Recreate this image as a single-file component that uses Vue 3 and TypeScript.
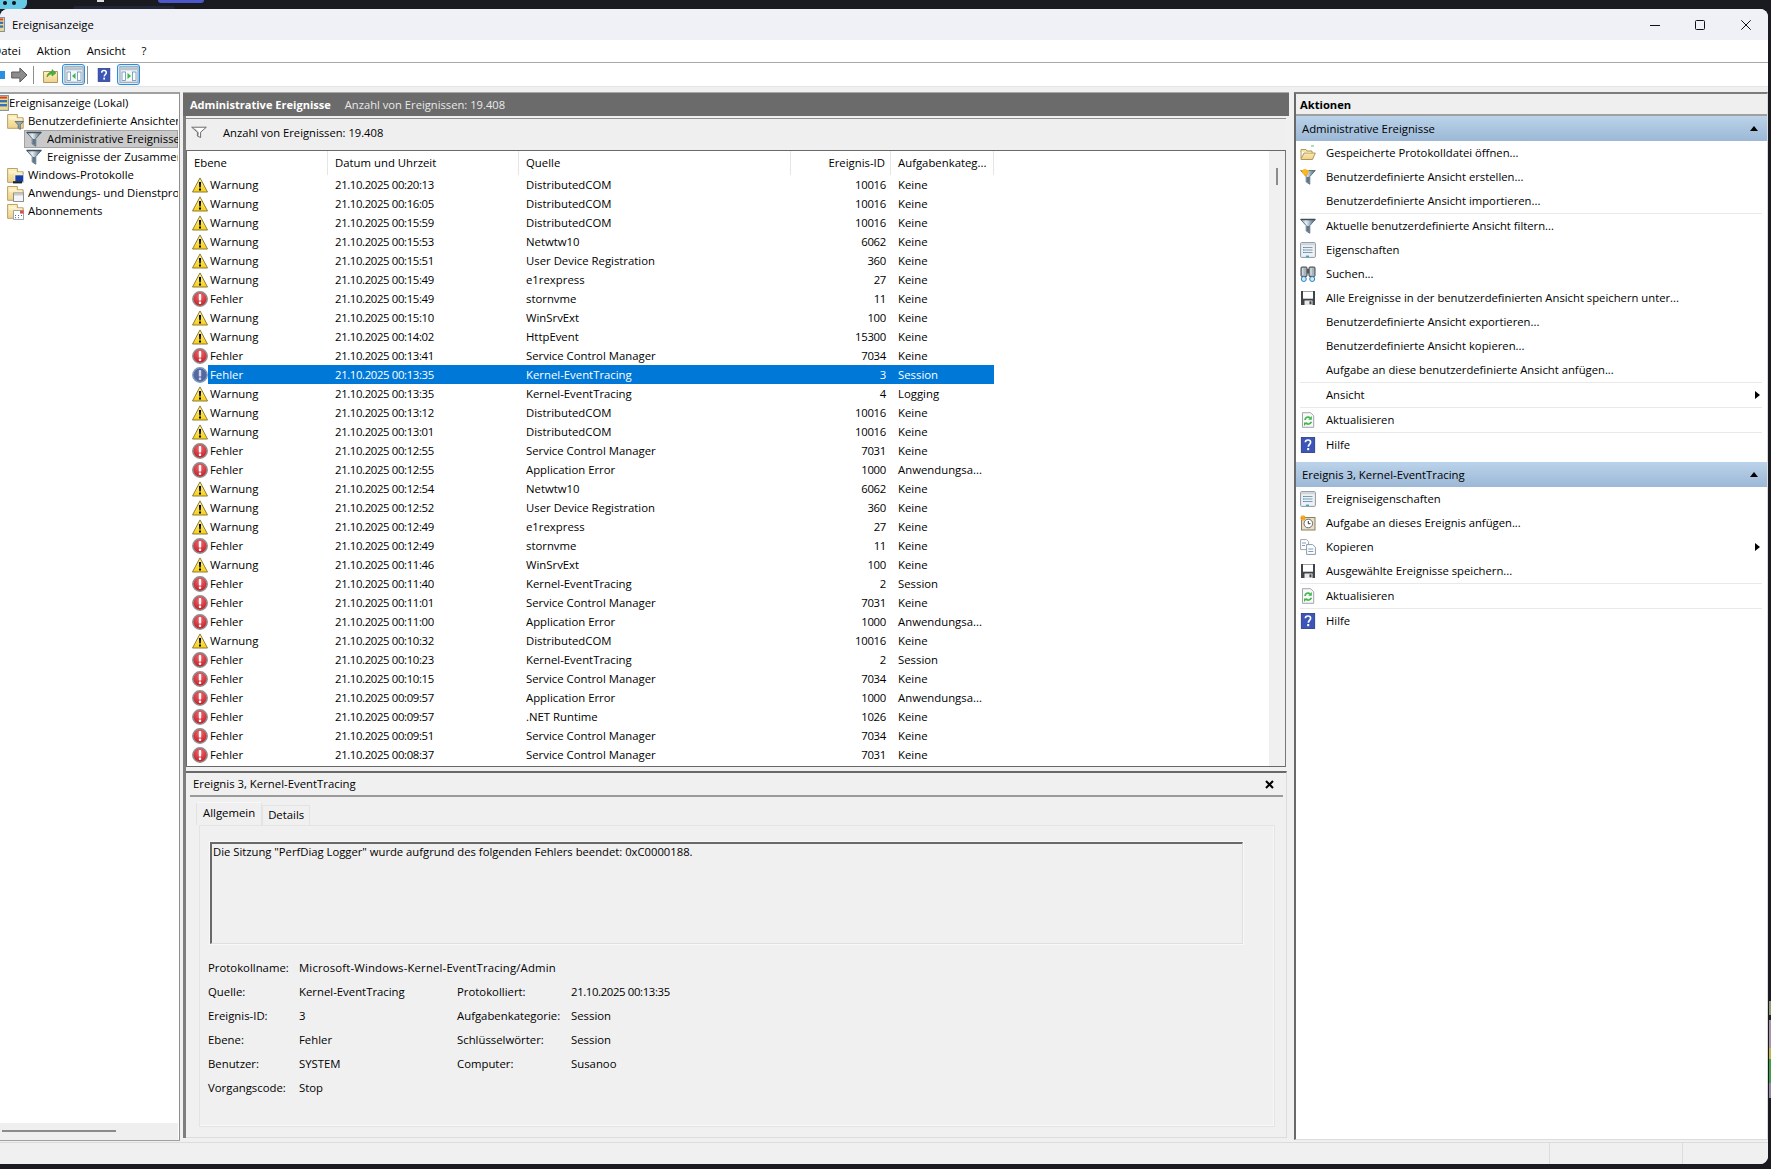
<script setup lang="ts">
interface Row { k: 'w' | 'e' | 's' | ''; t: string; q: string; id: string; c: string }
const SCM = 'Service Control Manager'
const DC = 'DistributedCOM'
const KE = 'Kernel-EventTracing'
const AE = 'Application Error'
const AN = 'Anwendungsa...'
const r = (k: Row['k'], t: string, q: string, id: string, c = 'Keine'): Row => ({ k, t, q, id, c })
const rows: Row[] = [
  r('w', '00:20:13', DC, '10016'), r('w', '00:16:05', DC, '10016'), r('w', '00:15:59', DC, '10016'),
  r('w', '00:15:53', 'Netwtw10', '6062'), r('w', '00:15:51', 'User Device Registration', '360'),
  r('w', '00:15:49', 'e1rexpress', '27'), r('e', '00:15:49', 'stornvme', '11'),
  r('w', '00:15:10', 'WinSrvExt', '100'), r('w', '00:14:02', 'HttpEvent', '15300'),
  r('e', '00:13:41', SCM, '7034'), r('s', '00:13:35', KE, '3', 'Session'),
  r('w', '00:13:35', KE, '4', 'Logging'), r('w', '00:13:12', DC, '10016'), r('w', '00:13:01', DC, '10016'),
  r('e', '00:12:55', SCM, '7031'), r('e', '00:12:55', AE, '1000', AN),
  r('w', '00:12:54', 'Netwtw10', '6062'), r('w', '00:12:52', 'User Device Registration', '360'),
  r('w', '00:12:49', 'e1rexpress', '27'), r('e', '00:12:49', 'stornvme', '11'),
  r('w', '00:11:46', 'WinSrvExt', '100'), r('e', '00:11:40', KE, '2', 'Session'),
  r('e', '00:11:01', SCM, '7031'), r('e', '00:11:00', AE, '1000', AN),
  r('w', '00:10:32', DC, '10016'), r('e', '00:10:23', KE, '2', 'Session'),
  r('e', '00:10:15', SCM, '7034'), r('e', '00:09:57', AE, '1000', AN),
  r('e', '00:09:57', '.NET Runtime', '1026'), r('e', '00:09:51', SCM, '7034'), r('e', '00:08:37', SCM, '7031'),
]
const iconOf = (k: Row['k']) => (k === 'w' ? '#i-warn' : k === 's' ? '#i-err-sel' : '#i-err')

interface Act { t?: string; i?: string; sub?: boolean; sep?: boolean }
const actions1: Act[] = [
  { t: 'Gespeicherte Protokolldatei öffnen...', i: '#i-open' },
  { t: 'Benutzerdefinierte Ansicht erstellen...', i: '#i-funnel-new' },
  { t: 'Benutzerdefinierte Ansicht importieren...' },
  { sep: true },
  { t: 'Aktuelle benutzerdefinierte Ansicht filtern...', i: '#i-funnel' },
  { t: 'Eigenschaften', i: '#i-props' },
  { t: 'Suchen...', i: '#i-find' },
  { t: 'Alle Ereignisse in der benutzerdefinierten Ansicht speichern unter...', i: '#i-save' },
  { t: 'Benutzerdefinierte Ansicht exportieren...' },
  { t: 'Benutzerdefinierte Ansicht kopieren...' },
  { t: 'Aufgabe an diese benutzerdefinierte Ansicht anfügen...' },
  { sep: true },
  { t: 'Ansicht', sub: true },
  { sep: true },
  { t: 'Aktualisieren', i: '#i-refresh' },
  { sep: true },
  { t: 'Hilfe', i: '#i-help' },
]
const actions2: Act[] = [
  { t: 'Ereigniseigenschaften', i: '#i-props' },
  { t: 'Aufgabe an dieses Ereignis anfügen...', i: '#i-task' },
  { t: 'Kopieren', i: '#i-copy', sub: true },
  { t: 'Ausgewählte Ereignisse speichern...', i: '#i-save' },
  { sep: true },
  { t: 'Aktualisieren', i: '#i-refresh' },
  { sep: true },
  { t: 'Hilfe', i: '#i-help' },
]
const sections = [
  { title: 'Administrative Ereignisse', items: actions1 },
  { title: 'Ereignis 3, Kernel-EventTracing', items: actions2 },
]
const tree = [
  { t: 'Ereignisanzeige (Lokal)', l: 0, i: '#i-app' },
  { t: 'Benutzerdefinierte Ansichten', l: 1, i: '#i-f-funnel' },
  { t: 'Administrative Ereignisse', l: 2, i: '#i-funnel', sel: true },
  { t: 'Ereignisse der Zusammenfassung', l: 2, i: '#i-funnel' },
  { t: 'Windows-Protokolle', l: 1, i: '#i-f-win' },
  { t: 'Anwendungs- und Dienstprotokolle', l: 1, i: '#i-f-app' },
  { t: 'Abonnements', l: 1, i: '#i-f-sub' },
]
const fields = [
  { a: 'Protokollname:', b: 'Microsoft-Windows-Kernel-EventTracing/Admin', wide: true },
  { a: 'Quelle:', b: 'Kernel-EventTracing', c: 'Protokolliert:', d: '21.10.2025 00:13:35', date: true },
  { a: 'Ereignis-ID:', b: '3', c: 'Aufgabenkategorie:', d: 'Session' },
  { a: 'Ebene:', b: 'Fehler', c: 'Schlüsselwörter:', d: 'Session' },
  { a: 'Benutzer:', b: 'SYSTEM', c: 'Computer:', d: 'Susanoo' },
  { a: 'Vorgangscode:', b: 'Stop', c: '', d: '' },
]
</script>

<template>
  <div class="app">
    <svg class="sprite" width="0" height="0">
      <defs>
        <linearGradient id="g-y" x1="0" y1="0" x2="0" y2="1"><stop offset="0" stop-color="#fff6a0" /><stop offset="1" stop-color="#f8cf10" /></linearGradient>
        <radialGradient id="g-r" cx=".5" cy=".3" r=".75"><stop offset="0" stop-color="#ef6b70" /><stop offset="1" stop-color="#c2101c" /></radialGradient>
        <linearGradient id="g-f" x1="0" y1="0" x2="1" y2="0"><stop offset="0" stop-color="#8ea5b4" /><stop offset=".38" stop-color="#e6eef2" /><stop offset=".75" stop-color="#7d96a6" /><stop offset="1" stop-color="#556d7d" /></linearGradient>
        <linearGradient id="g-fo" x1="0" y1="0" x2="0" y2="1"><stop offset="0" stop-color="#fdf0bf" /><stop offset="1" stop-color="#eed28a" /></linearGradient>
      </defs>
      <symbol id="i-warn" viewBox="0 0 16 16">
        <path d="M8 .9 15.500 15H.5Z" fill="url(#g-y)" stroke="#8d7c3a" stroke-width="1" stroke-linejoin="round" />
        <path d="M6.900 5h2.200l-.4 5.600H7.300Z" fill="#000" /><rect x="7" y="11.500" width="2" height="2" fill="#000" />
      </symbol>
      <symbol id="i-err" viewBox="0 0 16 16">
        <circle cx="8" cy="8" r="7.200" fill="url(#g-r)" stroke="#8f8f8f" stroke-width="1.500" />
        <rect x="6.800" y="3" width="2.400" height="6.600" rx=".7" fill="#fff" /><rect x="6.800" y="10.600" width="2.400" height="2.400" rx=".8" fill="#fff" />
      </symbol>
      <symbol id="i-err-sel" viewBox="0 0 16 16">
        <circle cx="8" cy="8" r="7.200" fill="#55679f" stroke="#7d9ac2" stroke-width="1.500" />
        <rect x="6.800" y="3" width="2.400" height="6.600" rx=".7" fill="#cfd6ea" /><rect x="6.800" y="10.600" width="2.400" height="2.400" rx=".8" fill="#cfd6ea" />
      </symbol>
      <symbol id="i-funnel" viewBox="0 0 16 16">
        <path d="M.7 1.500h14.600L9.800 7.600v7.600L6.200 13V7.600Z" fill="url(#g-f)" stroke="#55697a" stroke-width=".9" stroke-linejoin="round" />
        <path d="M.7 1.500h14.600" stroke="#3f4e5a" stroke-width="1.300" />
        <path d="M6.700 8h2.600v6.300L6.700 12.700Z" fill="#5d7688" />
      </symbol>
      <symbol id="i-funnel-out" viewBox="0 0 16 16">
        <path d="M.7 1.500h14.600L9.600 7.600v6.600L6.400 12.400V7.600Z" fill="#fff" stroke="#5e5e5e" stroke-width="1" stroke-linejoin="round" />
        <path d="M3.500 3l4 4.500V12" fill="none" stroke="#a9a9a9" />
      </symbol>
      <symbol id="i-funnel-new" viewBox="0 0 16 16">
        <path d="M.7 1.500h14.600L9.800 7.600v7.600L6.200 13V7.600Z" fill="url(#g-f)" stroke="#55697a" stroke-width=".9" stroke-linejoin="round" />
        <path d="M6.700 8h2.600v6.300L6.700 12.700Z" fill="#5d7688" />
        <path d="M.8 1h8.400L6.600 7.400H5.600Z" fill="#f7a416" /><circle cx="5" cy="2.800" r="2.700" fill="#fdb722" />
      </symbol>
      <symbol id="i-open" viewBox="0 0 16 16">
        <path d="M1 6V14.500H12.500L15.300 8H4L1.600 13" fill="url(#g-fo)" stroke="#a88c4b" stroke-width=".9" />
        <path d="M1 6.500V4.500h5l1 1.500h5V8" fill="#f7e3a3" stroke="#a88c4b" stroke-width=".9" />
        <path d="M11 1h3" stroke="#5ec25e" stroke-width="1" />
      </symbol>
      <symbol id="i-props" viewBox="0 0 16 16">
        <rect x=".6" y=".6" width="14.800" height="14.800" rx="1" fill="#eef1f3" stroke="#8d979f" />
        <rect x="1.200" y="1.200" width="13.600" height="2" fill="#cdd5da" /><path d="M3.500 5.500h9M3.500 8h9M3.500 10.500h9" stroke="#7f9bb0" />
        <path d="M3 5.500h1M3 8h1M3 10.500h1" stroke="#3c8fd0" /><rect x="6" y="13.600" width="3" height="1.400" fill="#2aa8e0" />
      </symbol>
      <symbol id="i-find" viewBox="0 0 16 16">
        <rect x="1" y="1" width="6" height="9.500" rx="1" fill="#a7b4bd" stroke="#333" stroke-width=".9" />
        <rect x="9" y="1" width="6" height="9.500" rx="1" fill="#a7b4bd" stroke="#333" stroke-width=".9" />
        <rect x="7" y="3" width="2" height="4.500" fill="#555" /><path d="M2.800 2v7M11 2v7" stroke="#e5eaee" />
        <circle cx="3.800" cy="13" r="2.500" fill="#cfe7f7" stroke="#2b80bd" /><circle cx="12.200" cy="13" r="2.500" fill="#cfe7f7" stroke="#2b80bd" />
      </symbol>
      <symbol id="i-save" viewBox="0 0 16 16">
        <path d="M1 1h14v14H1Z" fill="#3f4449" />
        <rect x="3" y="1.500" width="10" height="7.200" fill="#fff" /><rect x="4.500" y="10.500" width="8" height="4.500" fill="#e9e9e9" /><rect x="9.500" y="11.300" width="2" height="3" fill="#3f4449" />
      </symbol>
      <symbol id="i-refresh" viewBox="0 0 16 16">
        <path d="M2.500.7h8l3.200 3v11.600H2.500Z" fill="#f8f8f8" stroke="#a0a6aa" />
        <path d="M5 8a3.200 3.200 0 0 1 5.200-2.200" fill="none" stroke="#3fb54a" stroke-width="1.700" />
        <path d="M11.300 9.800a3.200 3.200 0 0 1-5.500 1.200" fill="none" stroke="#3fb54a" stroke-width="1.700" />
        <path d="M11.800 4v3.800H8.200Z" fill="#3fb54a" /><path d="M4 14v-3.600h3.600Z" fill="#3fb54a" />
      </symbol>
      <symbol id="i-help" viewBox="0 0 16 16">
        <rect x="1.300" y=".5" width="13.400" height="15" fill="#3d55b8" stroke="#27387f" stroke-width=".8" />
        <path d="M5.400 5.300C5.400 2.200 10.600 2.200 10.600 5.300c0 2-2.300 2.200-2.300 4.400" fill="none" stroke="#fff" stroke-width="1.700" /><rect x="7.200" y="11" width="2" height="2.200" fill="#fff" />
      </symbol>
      <symbol id="i-task" viewBox="0 0 16 16">
        <rect x="1.500" y="2.500" width="13.500" height="12.500" fill="#e7dfc9" stroke="#8a7f62" />
        <circle cx="8.300" cy="8.500" r="4.300" fill="#fff" stroke="#6d6d6d" /><path d="M8.300 6v2.700h2.200" fill="none" stroke="#333" />
        <path d="M3 0v6M0 3h6M1 1l4 4M5 1 1 5" stroke="#f2a21c" stroke-width="1.100" />
      </symbol>
      <symbol id="i-copy" viewBox="0 0 16 16">
        <path d="M.6.6h6l2 2v8H.6Z" fill="#fff" stroke="#a0a6aa" /><path d="M6.600 5.600h6l2.800 2.600v7.200H6.600Z" fill="#fff" stroke="#8b9ba8" />
        <path d="M2 4h4M2 6.500h3M8.300 10h5M8.300 12.500h5" stroke="#7a9fc1" />
      </symbol>
      <symbol id="i-folder" viewBox="0 0 17 17">
        <path d="M.6 1.500h9.800v3.300h5.800v10.500H.6Z" fill="url(#g-fo)" stroke="#b2985c" stroke-width=".9" />
        <path d="M2 4.500h7M2 6h13" stroke="#fff6d8" />
      </symbol>
      <symbol id="i-f-funnel" viewBox="0 0 17 17">
        <use href="#i-folder" width="17" height="17" />
        <path d="M8 8.500h8.500l-3.200 3.400v4.600L11.200 15v-3.100Z" fill="#8fa5b5" stroke="#55646f" stroke-width=".8" />
      </symbol>
      <symbol id="i-f-win" viewBox="0 0 17 17">
        <use href="#i-folder" width="17" height="17" />
        <rect x="8" y="8" width="8.600" height="7" fill="#1340a8" stroke="#fff" stroke-width=".6" /><rect x="6" y="14.200" width="9" height="2.200" fill="#222" />
      </symbol>
      <symbol id="i-f-app" viewBox="0 0 17 17">
        <use href="#i-folder" width="17" height="17" />
        <rect x="6.600" y="8" width="10" height="8.400" fill="#f5f5f5" stroke="#777" stroke-width=".8" /><rect x="7" y="8.400" width="9.200" height="2" fill="#c2c9cf" />
      </symbol>
      <symbol id="i-f-sub" viewBox="0 0 17 17">
        <use href="#i-folder" width="17" height="17" />
        <rect x="6.600" y="7.600" width="10" height="8.800" fill="#fff" stroke="#8793a0" stroke-width=".8" />
        <rect x="13" y="7.600" width="3.600" height="3" fill="#e2504c" /><path d="M8 12.500h1M11 12.500h1M14 12.500h1M8 14.700h1M11 14.700h1" stroke="#3572b0" />
      </symbol>
      <symbol id="i-app" viewBox="0 0 14 16">
        <rect x=".6" y=".6" width="12.800" height="14.800" fill="#e9d890" stroke="#7788a0" />
        <rect x="3" y="5" width="9" height="2.400" fill="#3570b8" /><rect x="3" y="9" width="9" height="2.400" fill="#3570b8" /><rect x="3" y="1.600" width="9" height="2" fill="#d8402a" />
      </symbol>
      <symbol id="i-win" viewBox="0 0 20 17">
        <rect x="1" y=".8" width="18" height="15.400" fill="#f4f7fa" stroke="#8c9aa5" />
        <rect x="1.500" y="1.300" width="17" height="3" fill="#b9c6cf" />
        <rect x="3" y="6" width="3.500" height="8.500" fill="#fff" stroke="#5f8fb8" stroke-width=".8" /><rect x="13.500" y="6" width="3.500" height="8.500" fill="#fff" stroke="#5f8fb8" stroke-width=".8" />
      </symbol>
    </svg>

    <i class="bg-blob"><b></b><b></b></i>
    <i class="bg-white"></i>
    <i class="bg-navy"></i>
    <i class="bg-pill"></i>
    <i class="bg-sliver"></i>

    <div class="win">
      <header class="titlebar">
        <svg class="ticon" width="15" height="15"><use href="#i-app" /></svg>
        <span class="ttext">Ereignisanzeige</span>
        <div class="ctrls">
          <svg width="10" height="10" viewBox="0 0 10 10"><path d="M0 5.500h10" stroke="#111" stroke-width="1" /></svg>
          <svg width="10" height="10" viewBox="0 0 10 10"><rect x=".5" y=".5" width="9" height="9" rx="1" fill="none" stroke="#111" /></svg>
          <svg class="cl" width="10" height="10" viewBox="0 0 10 10"><path d="M.3.3l9.400 9.400M9.700.3.3 9.700" stroke="#111" stroke-width="1" /></svg>
        </div>
      </header>

      <nav class="menu"><span>Datei</span><span>Aktion</span><span>Ansicht</span><span>?</span></nav>

      <div class="toolbar">
        <svg class="tb-back" width="5" height="8" viewBox="0 0 5 8"><rect width="5" height="8" fill="#2b8fe0" /></svg>
        <svg class="tb-fwd" width="17" height="16" viewBox="0 0 17 16"><path d="M.7 5h8.200V1L16 8l-7.100 7v-4H.7Z" fill="#8c8c8c" stroke="#5b5b5b" /></svg>
        <span class="tb-sep"></span>
        <svg class="tb-up" width="15" height="16" viewBox="0 0 15 16"><path d="M.5 4.500h14v11H.5Z" fill="url(#g-fo)" stroke="#b2985c" /><path d="M4 10c0-3 2-5 5-5V2.500L13 6 9 9V7C7 7 5.500 8 4 10Z" fill="#4bb23f" stroke="#2f8a2a" stroke-width=".5" /></svg>
        <span class="tb-btn"><svg width="20" height="17"><use href="#i-win" /><path d="M11.500 7v6l-3.500-3z" fill="#3fb54a" /></svg></span>
        <span class="tb-sep s2"></span>
        <svg class="tb-help" width="14" height="16"><use href="#i-help" width="14" height="16" /></svg>
        <span class="tb-btn b2"><svg width="20" height="17"><use href="#i-win" /><path d="M8.500 7v6l3.500-3z" fill="#3fb54a" /></svg></span>
      </div>

      <main class="main">
        <aside class="left">
          <div class="tree">
            <div v-for="n in tree" :key="n.t" class="node" :class="['l' + n.l, { sel: n.sel }]">
              <svg class="nicon" :width="n.l === 0 ? 14 : n.l === 1 ? 17 : 16" :height="n.l === 1 ? 17 : 16"><use :href="n.i" /></svg>
              <span>{{ n.t }}</span>
            </div>
          </div>
          <div class="hscroll"><i></i></div>
        </aside>

        <section class="center">
          <div class="ctitle"><b>Administrative Ereignisse</b><span>Anzahl von Ereignissen: 19.408</span></div>
          <div class="cbody">
            <div class="listpane">
              <div class="strip">
                <svg width="16" height="13" viewBox="0 0 16 16" preserveAspectRatio="none"><use href="#i-funnel-out" /></svg>
                <span>Anzahl von Ereignissen: 19.408</span>
              </div>
              <div class="listframe">
                <div class="list">
                  <div class="head">
                    <div>Ebene</div><div>Datum und Uhrzeit</div><div>Quelle</div><div class="num">Ereignis-ID</div><div>Aufgabenkateg...</div>
                  </div>
                  <div v-for="(x, i) in rows" :key="i" class="row" :class="{ selected: x.k === 's' }">
                    <div class="lv"><svg width="16" height="16"><use :href="iconOf(x.k)" /></svg><span>{{ x.k === 'w' ? 'Warnung' : 'Fehler' }}</span></div>
                    <div class="date">21.10.2025 {{ x.t }}</div><div>{{ x.q }}</div><div class="num">{{ x.id }}</div><div>{{ x.c }}</div>
                  </div>
                  <div class="row"><div class="lv"><svg width="16" height="16"><use href="#i-err" /></svg></div></div>
                </div>
                <div class="vscroll"><i></i></div>
              </div>
            </div>

            <div class="detail">
              <div class="dtitle"><span>Ereignis 3, Kernel-EventTracing</span>
                <svg width="9" height="9" viewBox="0 0 9 9"><path d="M1 1l7 7M8 1 1 8" stroke="#000" stroke-width="2" /></svg>
              </div>
              <div class="tabs"><span class="tab on">Allgemein</span><span class="tab">Details</span></div>
              <div class="panel">
                <div class="msg">Die Sitzung "PerfDiag Logger" wurde aufgrund des folgenden Fehlers beendet: 0xC0000188.</div>
                <div class="fields">
                  <template v-for="f in fields" :key="f.a">
                    <div>{{ f.a }}</div>
                    <div :class="{ wide: f.wide }">{{ f.b }}</div>
                    <template v-if="!f.wide"><div>{{ f.c }}</div><div :class="{ date: f.date }">{{ f.d }}</div></template>
                  </template>
                </div>
              </div>
            </div>
          </div>
        </section>

        <aside class="right">
          <div class="rhead">Aktionen</div>
          <template v-for="(s, si) in sections" :key="s.title">
            <div class="sect" :class="{ second: si === 1 }"><span>{{ s.title }}</span><i class="up"></i></div>
            <template v-for="(a, ai) in s.items" :key="ai">
              <div v-if="a.sep" class="rsep"></div>
              <div v-else class="act">
                <svg v-if="a.i" width="16" height="16"><use :href="a.i" /></svg><i v-else class="noicon"></i>
                <span>{{ a.t }}</span><i v-if="a.sub" class="more"></i>
              </div>
            </template>
          </template>
        </aside>
      </main>

      <footer class="status"><i></i><i></i></footer>
    </div>
  </div>
</template>

<style scoped>
.app {
  position: relative; width: 1771px; height: 1169px; overflow: hidden; background: #1a1b20; padding-top: 9px; box-sizing: border-box;
  font: 11.35px/16px "Open Sans", "Liberation Sans", sans-serif; color: #000;
}
.sprite { position: absolute; }
.bg-blob { position: absolute; left: 0; top: 0; width: 27px; height: 9px; background: #66c9e6; border-radius: 0 0 6px 0; }
.bg-blob b { position: absolute; top: 1px; width: 4px; height: 4px; border-radius: 50%; background: #111; left: 3px; }
.bg-blob b + b { left: 12px; }
.bg-white { position: absolute; left: 97px; top: 0; width: 7px; height: 2px; background: #ddd; }
.bg-navy { position: absolute; left: 73px; top: 6px; width: 102px; height: 3px; background: #22273a; border-radius: 3px 3px 0 0; }
.bg-pill { position: absolute; left: 158px; top: 0; width: 46px; height: 3px; background: #4c58c9; border-radius: 0 0 4px 4px; }
.bg-sliver { position: absolute; left: 1769px; top: 1001px; width: 2px; height: 97px; background: linear-gradient(#8e9c7a 0 14%, #222 14% 20%, #a896a6 20% 48%, #c3b44a 48% 60%, #3f9c48 60% 85%, #9686a8 85%); }

.win { position: relative; width: 1768px; height: 1155px; display: flex; flex-direction: column; background: #fff; border-radius: 8px 8px 8px 0; overflow: hidden; }
.titlebar { height: 31px; flex: none; background: #eff1f6; display: flex; align-items: center; }
.ticon { margin-left: -9px; margin-right: 6px; }
.ctrls { margin-left: auto; display: flex; gap: 35px; padding-right: 17px; }
.ctrls .cl { margin-left: 1px; }
.menu { height: 22px; flex: none; box-sizing: content-box; border-bottom: 1px solid #a9a9a9; display: flex; gap: 16px; align-items: center; margin-left: -7px; }
.toolbar { height: 23px; flex: none; display: flex; align-items: center; border-bottom: 1px solid #e4e4e4; }
.tb-back { margin-right: 6px; }
.tb-fwd { margin-right: 5px; }
.tb-sep { width: 1px; height: 18px; background: #8d8d8d; margin-right: 9px; }
.tb-sep.s2 { margin: 0 9px 0 2px; }
.tb-up { margin-right: 4px; }
.tb-btn { width: 23px; height: 21px; box-sizing: border-box; border: 1px solid #2a8ee0; border-radius: 3px; background: #d9e9f7; display: flex; align-items: center; justify-content: center; }
.tb-help { margin-right: 6px; }

.main { flex: 1; min-height: 0; display: flex; background: #f0f0f0; padding-top: 5px; gap: 3px; }
.left { width: 180px; flex: none; box-sizing: border-box; margin-bottom: 1px; background: #fff; border-top: 2px solid #a0a0a0; border-right: 1px solid #8f8f8f; border-bottom: 1px solid #a0a0a0; display: flex; flex-direction: column; overflow: hidden; }
.tree { flex: 1; width: 178px; overflow: hidden; }
.node { height: 18px; box-sizing: border-box; display: flex; align-items: center; white-space: nowrap; overflow: hidden; }
.node span { min-width: 0; overflow: hidden; flex: 1; }
.nicon { flex: none; }
.l0 { margin-left: -5px; }
.l1 { padding-left: 7px; gap: 4px; }
.l2 { margin-left: 24px; padding-left: 2px; gap: 5px; }
.node.sel { background: #c9c9c9; box-shadow: inset 0 0 0 1px #a2a2a2; }
.hscroll { height: 17px; flex: none; background: #efefef; position: relative; width: 178px; }
.hscroll i { position: absolute; left: 2px; top: 7px; width: 114px; height: 2px; background: #8b8b8b; }

.center { width: 1106px; flex: none; display: flex; flex-direction: column; margin-bottom: 4px; }
.ctitle { height: 24px; flex: none; box-sizing: border-box; border-top: 1px solid #a8a8a8; background: #6b6b6b; color: #e9e9e9; display: flex; align-items: center; padding-left: 7px; gap: 14px; font-size: 11.2px; }
.ctitle b { color: #fff; font-weight: 700; font-size: 11.05px; }
.cbody { flex: 1; min-height: 0; display: flex; flex-direction: column; border-left: 3px solid #7e7e7e; gap: 4px; padding-top: 2px; background: #f0f0f0; }
.listpane { width: 1100px; border-top: 1px solid #8f8f8f; display: flex; flex-direction: column; }
.strip { height: 31px; flex: none; background: #efefef; display: flex; align-items: center; padding-left: 5px; gap: 16px; box-sizing: border-box; padding-bottom: 4px; font-size: 11.2px; }
.listframe { height: 617px; flex: none; box-sizing: border-box; border: 1px solid #696969; border-right-color: #777; background: #fff; display: flex; width: 1100px; }
.list { flex: 1; overflow: hidden; position: relative; }
.head, .row { display: grid; grid-template-columns: 141px 191px 272px 100px 103px; width: 807px; }
.head { height: 24px; }
.head > div { display: flex; align-items: center; padding-left: 7px; border-right: 1px solid #e5e5e5; box-sizing: border-box; white-space: nowrap; height: 24px; }
.head .num { justify-content: flex-end; padding-right: 5px; }
.row { height: 19px; }
.row > div { display: flex; align-items: center; padding-left: 7px; white-space: nowrap; overflow: hidden; box-sizing: border-box; }
.row > .num { justify-content: flex-end; padding: 0 5px 0 0; letter-spacing: -.3px; }
.date { letter-spacing: -.36px; }
.row > .lv { padding-left: 5px; }
.lv span { flex: 1; height: 19px; line-height: 19px; padding-left: 2px; }
.row.selected > div:not(.lv), .row.selected .lv span { background: #0078d7; color: #fff; }
.vscroll { width: 16px; flex: none; background: #f0f0f0; position: relative; }
.vscroll i { position: absolute; left: 7px; top: 17px; width: 2px; height: 17px; background: #8b8b8b; }

.detail { flex: 1; min-height: 0; width: 1101px; box-sizing: border-box; border-top: 2px solid #696969; border-right: 1px solid #dcdcdc; border-bottom: 1px solid #dcdcdc; display: flex; flex-direction: column; padding-left: 4px; }
.dtitle { height: 22px; flex: none; display: flex; align-items: center; justify-content: space-between; padding: 0 12px 0 3px; }
.tabs { flex: none; border-top: 2px solid #9a9a9a; padding: 6px 0 0 6px; display: flex; align-items: flex-end; height: 30px; box-sizing: border-box; width: 1093px; }
.tab { height: 20px; display: flex; align-items: center; padding: 0 5px 2px; border: 1px solid #e3e3e3; border-bottom: 0; box-sizing: border-box; }
.tab.on { height: 23px; padding: 0 6px 3px 6px; background: #f0f0f0; border-top-color: #f8f8f8; }
.panel { margin-left: 9px; width: 1076px; height: 302px; box-sizing: border-box; border: 1px solid #e4e4e4; box-shadow: inset -1px -1px 0 #f8f8f8; padding: 16px 0 0 10px; }
.msg { width: 1033px; height: 102px; box-sizing: border-box; border-top: 2px solid #696969; border-left: 2px solid #696969; border-right: 1px solid #dfdfdf; border-bottom: 1px solid #dfdfdf; outline: 1px solid #f8f8f8; padding: 0 1px; font-size: 11.25px; }
.fields { margin: 12px 0 0 -2px; display: grid; grid-template-columns: 91px 158px 114px auto; grid-auto-rows: 24px; align-items: center; white-space: nowrap; }
.fields .wide { grid-column: 2 / 5; letter-spacing: .16px; }

.right { width: 474px; flex: none; box-sizing: border-box; margin: 0 0 2px 2px; border-top: 2px solid #7c7c7c; border-left: 2px solid #696969; border-right: 1px solid #dcdcdc; border-bottom: 1px solid #dcdcdc; background: #fff; display: flex; flex-direction: column; }
.rhead { height: 22px; flex: none; box-sizing: border-box; background: #efefef; border-bottom: 2px solid #a0a0a0; display: flex; align-items: center; padding: 1px 0 0 4px; font-weight: 700; font-size: 11.2px; }
.sect { height: 25px; flex: none; display: flex; align-items: center; justify-content: space-between; padding: 0 9px 0 6px; background: linear-gradient(#bbd3ea, #9cb8d6); }
.sect.second { margin-top: 5px; }
.up { width: 0; height: 0; border: 4.5px solid transparent; border-top: 0; border-bottom: 5px solid #000; }
.act { height: 24px; flex: none; display: flex; align-items: center; padding-left: 4px; gap: 10px; font-size: 11.28px; }
.noicon { width: 16px; flex: none; }
.more { margin-left: auto; margin-right: 7px; width: 0; height: 0; border: 4.5px solid transparent; border-right: 0; border-left: 5px solid #000; }
.rsep { height: 1px; flex: none; background: #e9e9e9; margin: 0 5px 0 4px; }

.status { height: 22px; flex: none; background: #f0f0f0; border-top: 1px solid #dcdcdc; box-sizing: border-box; position: relative; display: grid; grid-template-columns: 133px 86px; justify-content: end; }
.status i { border-left: 1px solid #dcdcdc; }
</style>

<style>
html, body { margin: 0; background: #1a1b20; }
</style>
